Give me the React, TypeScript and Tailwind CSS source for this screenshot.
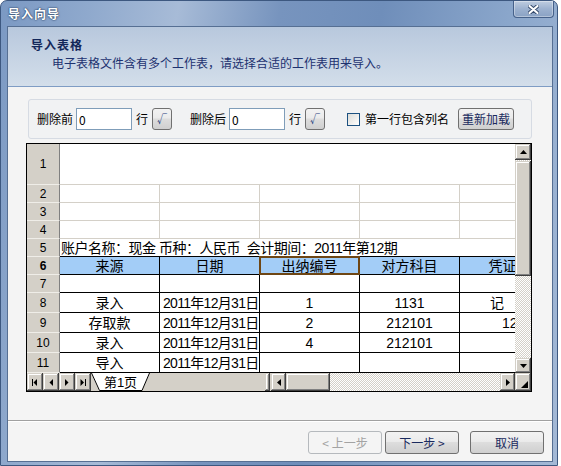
import React from 'react';

const FONT = "font-['Noto_Sans_CJK_SC','Noto_Sans',sans-serif]";
const SHEET_FONT = "font-['Liberation_Sans','Noto_Sans_CJK_SC',sans-serif]";

// classic raised 3D look for scrollbar parts
const BEVEL =
  'bg-[#d4d0c8] shadow-[inset_-1px_-1px_#404040,inset_1px_1px_#d4d0c8,inset_-2px_-2px_#808080,inset_2px_2px_#ffffff]';
const CHECKER =
  'bg-[repeating-conic-gradient(#ffffff_0%_25%,#d4d0c8_0%_50%)] bg-[length:2px_2px]';
const VISTA_BTN =
  'rounded-[3px] border border-[#707070] bg-[linear-gradient(#f2f2f2_0%,#ebebeb_45%,#dddddd_50%,#cfcfcf_100%)]';

function Tri({ dir }: { dir: 'up' | 'down' | 'left' | 'right' }) {
  const vertical = dir === 'up' || dir === 'down';
  const w = vertical ? 7 : 4;
  const h = vertical ? 4 : 7;
  const pts = {
    up: '0,4 7,4 3.5,0',
    down: '0,0 7,0 3.5,4',
    left: '4,0 4,7 0,3.5',
    right: '0,0 0,7 4,3.5',
  }[dir];
  return (
    <svg width={w} height={h} viewBox={`0 0 ${w} ${h}`}>
      <polygon points={pts} fill="#000" />
    </svg>
  );
}

function NavIcon({ kind }: { kind: 'first' | 'prev' | 'next' | 'last' }) {
  return (
    <svg width="6" height="7" viewBox="0 0 6 7">
      {kind === 'first' && (
        <>
          <rect x="0" y="0" width="1" height="7" fill="#000" />
          <polygon points="5,0 5,7 1.5,3.5" fill="#000" />
        </>
      )}
      {kind === 'prev' && <polygon points="5,0 5,7 1.5,3.5" fill="#000" />}
      {kind === 'next' && <polygon points="1,0 1,7 4.5,3.5" fill="#000" />}
      {kind === 'last' && (
        <>
          <polygon points="0.5,0 0.5,7 4,3.5" fill="#000" />
          <rect x="5" y="0" width="1" height="7" fill="#000" />
        </>
      )}
    </svg>
  );
}

function TitleBar() {
  return (
    <div className="h-[25px] flex justify-between pl-[7px] pr-[3px]">
      <span className="self-center text-[12px] font-bold text-white tracking-[1px] [text-shadow:0_0_2px_#23395c,0_0_1px_#23395c]">
        导入向导
      </span>
      <div className="w-[41px] h-[17px] rounded-b-[4px] border border-t-0 border-[#46618a] bg-[linear-gradient(#bfcde0,#9cb1cf_50%,#8aa2c4)] flex items-center justify-center shadow-[inset_0_0_0_1px_rgba(255,255,255,0.35)]">
        <svg width="11" height="9" viewBox="0 0 11 9">
          <path d="M1.5,1 L9.5,8 M9.5,1 L1.5,8" stroke="#34496b" strokeWidth="4" strokeLinecap="round" />
          <path d="M1.5,1 L9.5,8 M9.5,1 L1.5,8" stroke="#ffffff" strokeWidth="2.2" strokeLinecap="round" />
        </svg>
      </div>
    </div>
  );
}

function Head({ n, h, bold }: { n: number; h: string; bold?: boolean }) {
  return (
    <div
      className={`${h} w-[33px] shrink-0 flex items-center justify-center bg-[#d4d0c8] border-r border-b border-r-[#808080] border-b-[#efede8] text-[12px] leading-none ${bold ? 'font-bold' : ''}`}
    >
      {n}
    </div>
  );
}

function Cell({ children, className = '' }: { children?: React.ReactNode; className?: string }) {
  return (
    <div className={`w-[100px] shrink-0 h-full border-r border-b flex items-center text-[14px] leading-none whitespace-nowrap ${className}`}>
      {children}
    </div>
  );
}

const dataRows = [
  { n: 8, src: '录入', date: '2011年12月31日', no: '1', acct: '1131', e: '记', ePad: 'pl-[30px]' },
  { n: 9, src: '存取款', date: '2011年12月31日', no: '2', acct: '212101', e: '123', ePad: 'pl-[42px]' },
  { n: 10, src: '录入', date: '2011年12月31日', no: '4', acct: '212101', e: '', ePad: '' },
  { n: 11, src: '导入', date: '2011年12月31日', no: '', acct: '', e: '', ePad: '' },
];

function Sheet() {
  return (
    <div className={`ml-[18px] mt-[4px] w-[506px] h-[249px] border border-black bg-white flex flex-col ${SHEET_FONT}`}>
      <div className="h-[229px] flex">
        {/* grid */}
        <div className="w-[488px] h-full overflow-hidden flex flex-col">
          <div className="flex h-[41px]">
            <Head n={1} h="h-full" />
            <div className="w-[500px] shrink-0 border-b border-[#d4d0c8]" />
          </div>
          {[2, 3, 4].map((n) => (
            <div key={n} className="flex h-[18px]">
              <Head n={n} h="h-full" />
              {[0, 1, 2, 3, 4].map((c) => (
                <Cell key={c} className="border-[#d4d0c8]" />
              ))}
            </div>
          ))}
          <div className="flex h-[18px]">
            <Head n={5} h="h-full" />
            <div className="w-[500px] shrink-0 border-b border-black flex items-center pl-[1px] text-[14px] tracking-[-0.5px] leading-none whitespace-pre">
              账户名称：现金 币种：人民币  会计期间：2011年第12期
            </div>
          </div>
          <div className="flex h-[18px]">
            <Head n={6} h="h-full" bold />
            <Cell className="border-black bg-[#a3cdf7] justify-center">来源</Cell>
            <Cell className="border-black bg-[#a3cdf7] justify-center">日期</Cell>
            <Cell className="border-black bg-[#a3cdf7] justify-center relative">
              出纳编号
              <span className="absolute inset-[-1px] border-2 border-[#6e4614]" />
            </Cell>
            <Cell className="border-black bg-[#a3cdf7] justify-center">对方科目</Cell>
            <Cell className="border-black bg-[#a3cdf7] justify-center">凭证号</Cell>
          </div>
          <div className="flex h-[18px]">
            <Head n={7} h="h-full" />
            {[0, 1, 2, 3, 4].map((c) => (
              <Cell key={c} className="border-black" />
            ))}
          </div>
          {dataRows.map((r) => (
            <div key={r.n} className="flex h-[20px]">
              <Head n={r.n} h="h-full" />
              <Cell className="border-black justify-center">{r.src}</Cell>
              <Cell className="border-black pl-[3px] text-[13px] tracking-[-0.7px]">{r.date}</Cell>
              <Cell className="border-black justify-center">{r.no}</Cell>
              <Cell className="border-black justify-center">{r.acct}</Cell>
              <Cell className={`border-black ${r.ePad}`}>{r.e}</Cell>
            </div>
          ))}
        </div>
        {/* vertical scrollbar */}
        <div className={`w-[16px] h-full flex flex-col ${CHECKER}`}>
          <div className={`h-[16px] flex items-center justify-center ${BEVEL}`}>
            <Tri dir="up" />
          </div>
          <div className={`h-[115px] mt-[1px] ${BEVEL}`} />
          <div className="flex-1" />
          <div className={`h-[15px] flex items-center justify-center ${BEVEL}`}>
            <Tri dir="down" />
          </div>
        </div>
      </div>
      {/* sheet tabs + horizontal scrollbar */}
      <div className="h-[18px] flex bg-[#d4d0c8]">
        {(['first', 'prev', 'next', 'last'] as const).map((k) => (
          <div key={k} className={`w-[16px] h-full flex items-center justify-center ${BEVEL}`}>
            <NavIcon kind={k} />
          </div>
        ))}
        <div className="w-[59px] h-full relative flex items-center justify-center text-[13px] leading-none">
          <svg className="absolute inset-0" width="59" height="18" viewBox="0 0 59 18">
            <polygon points="0,0 8,17.5 51,17.5 59,0" fill="#ffffff" />
            <polyline points="0.5,0 8.5,17.5 51,17.5 58.5,0" fill="none" stroke="#000" strokeWidth="1" />
          </svg>
          <span className="relative">第1页</span>
        </div>
        <div className="w-[115px] h-full" />
        <div className={`w-[5px] h-full ${BEVEL}`} />
        <div className="w-[1px] h-full" />
        <div className={`w-[15px] h-full flex items-center justify-center ${BEVEL}`}>
          <Tri dir="left" />
        </div>
        <div className={`w-[44px] h-full ${BEVEL}`} />
        <div className={`w-[170px] h-full ${CHECKER}`} />
        <div className={`w-[15px] h-full flex items-center justify-center ${BEVEL}`}>
          <Tri dir="right" />
        </div>
        <div className={`w-[16px] h-full flex items-end justify-end p-[3px] ${BEVEL}`}>
          <svg width="7" height="7" viewBox="0 0 7 7">
            <polygon points="7,0 7,7 0,7" fill="#000" />
          </svg>
        </div>
      </div>
    </div>
  );
}

function Toolbar() {
  const input =
    "w-[56px] h-[22px] border border-[#7f9db9] bg-white px-[2px] text-[12px] text-black outline-none font-['Noto_Sans_CJK_SC',sans-serif]";
  const tick = `w-[20px] h-[22px] ${VISTA_BTN} flex items-center justify-center text-[10px] text-[#1e3b7c] leading-none`;
  return (
    <div className="mx-[20px] mt-[12px] h-[40px] rounded-[3px] border border-[#d6dbe3] bg-[#f1f2f3] flex items-center pl-[8px] text-[12px] leading-none">
      <span>删除前</span>
      <input readOnly value="0" className={`ml-[3px] ${input}`} />
      <span className="ml-[4px]">行</span>
      <div className={`ml-[4px] ${tick}`}>√</div>
      <span className="ml-[18px]">删除后</span>
      <input readOnly value="0" className={`ml-[3px] ${input}`} />
      <span className="ml-[4px]">行</span>
      <div className={`ml-[4px] ${tick}`}>√</div>
      <div className="ml-[22px] w-[13px] h-[13px] border border-[#1c5180] bg-[linear-gradient(135deg,#dcdcd7,#ffffff)]" />
      <span className="ml-[5px]">第一行包含列名</span>
      <div className={`ml-[9px] w-[56px] h-[22px] ${VISTA_BTN} flex items-center justify-center text-[#1a2a5e]`}>
        重新加载
      </div>
    </div>
  );
}

export default function App() {
  return (
    <div className={`w-[561px] h-[466px] bg-white overflow-hidden ${FONT} text-[12px] text-black`}>
      <div className="w-[558px] h-[466px] flex flex-col rounded-t-[7px] border border-[#3d5880] bg-[linear-gradient(100deg,#7b99c3_0%,#8fa9cd_14%,#a7bbd7_28%,#7794be_44%,#6f8eba_60%,#8aa6cb_80%,#a4b9d6_100%)]">
        <TitleBar />
        <div className="flex-1 ml-[6px] mr-[4px] mb-[3px] flex flex-col border border-[#566f93] bg-[#f4f4f4]">
          {/* header banner */}
          <div className="h-[60px] border-b border-[#7f9cc4] bg-[linear-gradient(#b8c8dd,#d3deea)]">
            <div className="pl-[23px] pt-[11px] leading-[14px] font-bold text-[#13275a] tracking-[1px]">导入表格</div>
            <div className="pl-[44px] mt-[4px] leading-[14px] text-[#1d3270]">
              电子表格文件含有多个工作表，请选择合适的工作表用来导入。
            </div>
          </div>
          <Toolbar />
          <Sheet />
          <div className="mt-[28px] border-t border-b border-t-[#a0a0a0] border-b-white" />
          <div className="mt-[9px] flex justify-end pr-[8px] text-[12px] leading-none">
            <div className="w-[74px] h-[23px] rounded-[3px] border border-[#b5b9bd] bg-[#f4f4f4] flex items-center justify-center text-[#a3a3a3]">
              &lt; 上一步
            </div>
            <div className={`ml-[3px] w-[74px] h-[23px] ${VISTA_BTN} flex items-center justify-center text-[#1a2a5e]`}>
              下一步 &gt;
            </div>
            <div className={`ml-[11px] w-[74px] h-[23px] ${VISTA_BTN} flex items-center justify-center text-[#1a2a5e]`}>
              取消
            </div>
          </div>
        </div>
      </div>
    </div>
  );
}
